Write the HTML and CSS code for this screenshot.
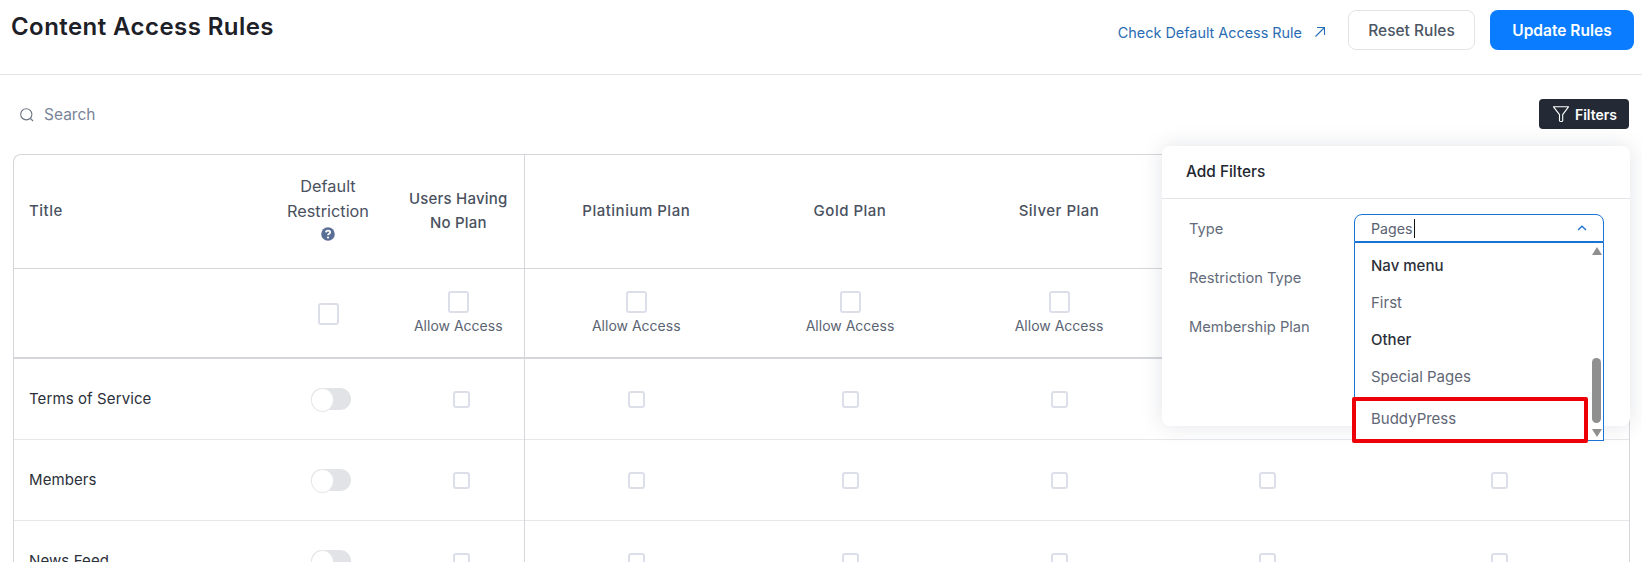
FILE: index.html
```html
<!DOCTYPE html>
<html lang="en">
<head>
<meta charset="utf-8">
<title>Content Access Rules</title>
<link rel="stylesheet" href="styles.css">
</head>
<body>
<div class="page">
  <header class="topbar">
    <h1 class="title">Content Access Rules</h1>
    <div class="actions">
      <a class="check-link" href="#">Check Default Access Rule
        <svg class="arrow" viewBox="0 0 12 12" width="12" height="12"><path d="M1.5 10.5 10.5 1.5M3 1.5h7.5V9" fill="none" stroke="currentColor" stroke-width="1.1"/></svg>
      </a>
      <button class="btn btn-reset">Reset Rules</button>
      <button class="btn btn-update">Update Rules</button>
    </div>
  </header>

  <div class="toolbar">
    <div class="search">
      <svg viewBox="0 0 16 16" width="16" height="16"><circle cx="7.3" cy="7.3" r="5.6" fill="none" stroke="#6b7280" stroke-width="1.1"/><path d="M11.5 11.5 14 14" stroke="#6b7280" stroke-width="1.1" fill="none"/></svg>
      <span>Search</span>
    </div>
    <button class="filters-btn">
      <svg viewBox="0 0 18 18" width="18" height="18"><path d="M1.5 1.8h15L10.7 9.6v6.2c0 .9-2.9 .9-3.2 0V9.6Z" fill="none" stroke="#fff" stroke-width="1.1" stroke-linejoin="round"/></svg>
      Filters
    </button>
  </div>

  <div class="table-wrap">
    <table class="rules">
      <colgroup>
        <col class="c-title"><col class="c-default"><col class="c-noplan"><col class="c-p1"><col class="c-p2"><col class="c-p3"><col class="c-p4"><col class="c-p5">
      </colgroup>
      <thead>
        <tr class="head-row">
          <th class="left">Title</th>
          <th class="wrap">Default Restriction
            <svg class="help" viewBox="0 0 14 14" width="14" height="14"><circle cx="7" cy="7" r="6.8" fill="#5a6f96"/><path d="M4.9 5.4C5 3.1 9.2 3.1 9.2 5.3 9.2 6.800 7 6.600 7 8.200" fill="none" stroke="#fff" stroke-width="1.700"/><circle cx="7" cy="10.500" r="1.100" fill="#fff"/></svg>
          </th>
          <th class="wrap sep">Users Having No Plan</th>
          <th>Platinium Plan</th>
          <th>Gold Plan</th>
          <th>Silver Plan</th>
          <th></th>
          <th></th>
        </tr>
        <tr class="allow-row">
          <td></td>
          <td><span class="cb cb-lg"></span></td>
          <td class="sep"><span class="cb cb-lg"></span><span class="allow">Allow Access</span></td>
          <td><span class="cb cb-lg"></span><span class="allow">Allow Access</span></td>
          <td><span class="cb cb-lg"></span><span class="allow">Allow Access</span></td>
          <td><span class="cb cb-lg"></span><span class="allow">Allow Access</span></td>
          <td><span class="cb cb-lg"></span><span class="allow">Allow Access</span></td>
          <td><span class="cb cb-lg"></span><span class="allow">Allow Access</span></td>
        </tr>
      </thead>
      <tbody>
        <tr>
          <td class="left">Terms of Service</td>
          <td class="tg"><span class="toggle"></span></td>
          <td class="sep nudge"><span class="cb"></span></td>
          <td><span class="cb"></span></td><td><span class="cb"></span></td><td><span class="cb"></span></td><td><span class="cb"></span></td><td><span class="cb"></span></td>
        </tr>
        <tr>
          <td class="left">Members</td>
          <td class="tg"><span class="toggle"></span></td>
          <td class="sep nudge"><span class="cb"></span></td>
          <td><span class="cb"></span></td><td><span class="cb"></span></td><td><span class="cb"></span></td><td><span class="cb"></span></td><td><span class="cb"></span></td>
        </tr>
        <tr>
          <td class="left">News Feed</td>
          <td class="tg"><span class="toggle"></span></td>
          <td class="sep nudge"><span class="cb"></span></td>
          <td><span class="cb"></span></td><td><span class="cb"></span></td><td><span class="cb"></span></td><td><span class="cb"></span></td><td><span class="cb"></span></td>
        </tr>
      </tbody>
    </table>
  </div>

  <aside class="popup">
    <div class="popup-head">Add Filters</div>
    <div class="popup-body">
      <div class="labels">
        <span>Type</span>
        <span>Restriction Type</span>
        <span>Membership Plan</span>
      </div>
      <div class="select">
        <div class="select-box">
          <span class="value">Pages</span><span class="caret"></span>
          <svg class="chev" viewBox="0 0 10 6" width="10" height="6"><path d="M1 5 5 1.200 9 5" fill="none" stroke="#1a73d4" stroke-width="1.300"/></svg>
        </div>
        <div class="dropdown">
          <div class="opt group">Nav menu</div>
          <div class="opt">First</div>
          <div class="opt group">Other</div>
          <div class="opt">Special Pages</div>
          <div class="opt buddy">BuddyPress</div>
          <div class="scrollbar">
            <span class="sb-up"></span>
            <span class="sb-thumb"></span>
            <span class="sb-down"></span>
          </div>
        </div>
      </div>
    </div>
  </aside>
  <div class="highlight"></div>
</div>
</body>
</html>
```
FILE: styles.css
```css
* { box-sizing: border-box; }
html, body { margin: 0; padding: 0; background: #fff; }
body { font-family: Inter, "Noto Sans", sans-serif; color: #374151; overflow: hidden; }
.page { position: relative; width: 1642px; height: 562px; overflow: hidden; }

.topbar { height: 75px; border-bottom: 1px solid #e2e4e8; display: flex; justify-content: space-between; align-items: flex-start; padding: 10px 8px 0 11px; }
.title { margin: 3px 0 0; font-size: 24px; line-height: 28px; font-weight: 600; color: #1d2027; letter-spacing: .43px; }
.actions { display: flex; align-items: center; gap: 15px; }
.check-link { display: flex; align-items: center; gap: 12px; color: #2a6cb3; font-size: 14.400px; text-decoration: none; margin-right: 7px; padding-top: 4px; }
.arrow { display: block; }
.btn { height: 40px; border-radius: 8px; font-family: inherit; font-size: 15.500px; font-weight: 500; padding: 0; }
.btn-reset { width: 127px; background: #fff; border: 1px solid #e2e4e8; color: #4b5563; }
.btn-update { width: 144px; background: #0a7cff; border: 0; color: #fff; font-weight: 600; }

.toolbar { display: flex; justify-content: space-between; padding: 24px 13px 0 19px; height: 79px; align-items: flex-start; }
.search { display: flex; align-items: center; gap: 9px; color: #7a8499; font-size: 15.500px; height: 30px; padding-top: 1px; }
.filters-btn { width: 90px; height: 30px; background: #232a35; color: #fff; border: 0; border-radius: 4px; font-family: inherit; font-size: 14px; font-weight: 600; display: flex; align-items: center; justify-content: center; gap: 5px; padding: 0 0 0 1px; }

.table-wrap { margin-left: 13px; width: 1617px; border: 1px solid #d4d6da; border-bottom: 0; border-radius: 8px 0 0 0; }
.rules { width: 100%; table-layout: fixed; border-collapse: collapse; font-size: 15px; }
.c-title { width: 249px; } .c-default { width: 130px; } .c-noplan { width: 131px; }
.c-p1 { width: 222px; } .c-p2 { width: 206px; } .c-p3 { width: 212px; } .c-p4 { width: 204px; } .c-p5 { width: 261px; }
.rules th, .rules td { text-align: center; padding: 0; vertical-align: middle; }
.rules th { font-weight: 500; color: #4a5160; font-size: 15px; letter-spacing: .5px; line-height: 25px; padding-bottom: 1px; }
.rules th.wrap { font-weight: 400; font-size: 16.300px; letter-spacing: 0; padding: 0 14px; }
.rules th.sep { font-weight: 500; font-size: 15px; letter-spacing: .2px; line-height: 24px; padding: 0 8px 1px; }
.rules th:nth-child(n+4), .rules td:nth-child(n+4) { padding-left: 2px; }
.sep { border-right: 1px solid #d4d6da; }
.rules .left { text-align: left; padding-left: 15px; }
.head-row { height: 113px; border-bottom: 1px solid #d4d6da; }
.allow-row { height: 90px; border-bottom: 2px solid #d4d6da; }
.rules tbody tr { height: 81px; border-bottom: 1px solid #e5e7eb; }
.rules tbody td.left { color: #2b303a; font-size: 15px; letter-spacing: .1px; }
.help { display: block; margin: 3px auto 8px; }
.cb { display: inline-block; width: 17px; height: 17px; border: 2px solid #dcdfea; border-radius: 3px; background: #fff; vertical-align: middle; }
.cb-lg { width: 21px; height: 22px; }
.allow { display: block; font-size: 14px; line-height: 20px; color: #5b6472; margin-top: 3px; }
.rules .allow-row td { padding-top: 2px; }
.rules .allow-row td:nth-child(2) { padding-left: 1px; padding-top: 3px; }
.rules td.nudge { padding-left: 6px; }
.rules td.tg { padding-left: 6px; }
.toggle { display: inline-block; position: relative; width: 40px; height: 22px; border-radius: 11px; background: #e1e3e7; vertical-align: middle; }
.toggle::before { content: ""; position: absolute; left: 0; top: 0; width: 21px; height: 22px; border-radius: 50%; background: #fff; border: 1px solid #e6e7eb; }

.popup { position: absolute; left: 1162px; top: 146px; width: 468px; height: 280px; background: #fff; border-radius: 8px; box-shadow: 0 0 22px rgba(40, 50, 80, .13); }
.popup-head { height: 53px; padding: 0 24px 2px; display: flex; align-items: center; font-size: 15.400px; font-weight: 500; color: #23272f; border-bottom: 1px solid #e2e4e8; }
.popup-body { display: flex; padding: 15px 0 0 27px; }
.labels { width: 165px; display: flex; flex-direction: column; gap: 26px; padding-top: 4px; font-size: 14.700px; line-height: 23px; color: #636b7a; }
.select { position: relative; width: 250px; }
.select-box { height: 28px; border: 1px solid #1a73d4; border-radius: 8px 8px 0 0; display: flex; align-items: center; padding-left: 16px; font-size: 14.200px; color: #5a6270; position: relative; }
.caret { width: 1px; height: 19px; background: #111; margin-left: 1px; }
.chev { position: absolute; right: 16px; top: 10px; }
.dropdown { position: absolute; left: 0; top: 28px; width: 250px; height: 199px; background: #fff; border: 1px solid #1a73d4; font-size: 15px; padding: 4px 0 0 16px; color: #5f6775; }
.opt { height: 37px; line-height: 37px; }
.group { font-size: 15px; font-weight: 500; color: #2b303a; }
.buddy { margin-top: 5px; }
.scrollbar { position: absolute; right: 2px; top: 0; bottom: 0; width: 9px; }
.sb-up { position: absolute; top: 4px; left: 0; width: 0; height: 0; border: 5px solid transparent; border-top: 0; border-bottom: 8px solid #8f8f8f; }
.sb-down { position: absolute; bottom: 3px; left: 0; width: 0; height: 0; border: 5px solid transparent; border-bottom: 0; border-top: 8px solid #8f8f8f; }
.sb-thumb { position: absolute; top: 115px; left: 0; width: 9px; height: 65px; border-radius: 5px; background: #8f8f8f; }
.highlight { position: absolute; left: 1352px; top: 397px; width: 236px; height: 46px; border: 4px solid #ee0009; border-radius: 2px; }
```
